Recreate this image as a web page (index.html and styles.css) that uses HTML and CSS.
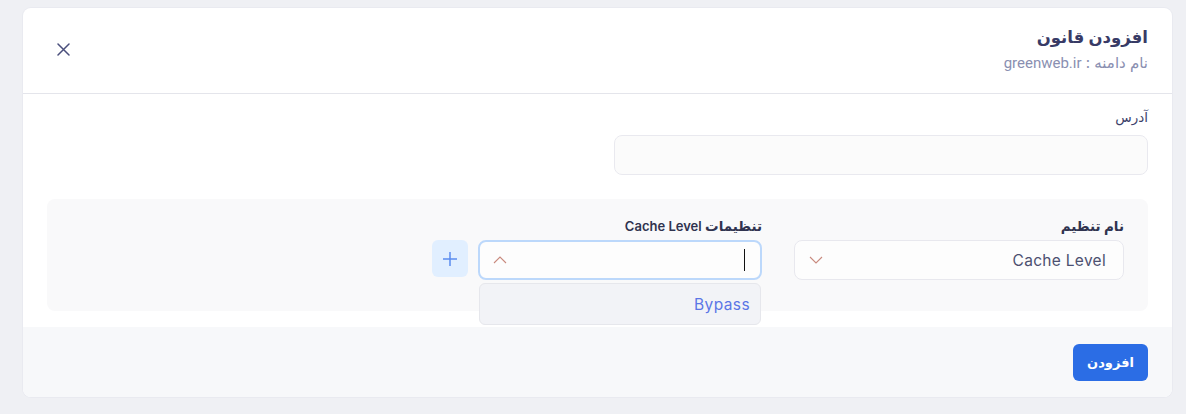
FILE: index.html
```html
<!DOCTYPE html>
<html lang="fa" dir="rtl">
<head>
<meta charset="utf-8">
<link rel="stylesheet" href="styles.css">
</head>
<body>
<div class="modal">
  <header class="modal-head">
    <div class="head-text">
      <h1 class="title">افزودن قانون</h1>
      <p class="subtitle">نام دامنه : <span class="domain">greenweb.ir</span></p>
    </div>
    <button class="close" aria-label="close">
      <svg width="13" height="13" viewBox="0 0 13 13"><path d="M1 1L12 12M12 1L1 12" stroke="#4a4f7c" stroke-width="1.5" stroke-linecap="round"/></svg>
    </button>
  </header>
  <section class="modal-body">
    <div class="addr-grid">
      <div class="field">
        <label class="label">آدرس</label>
        <div class="input"></div>
      </div>
    </div>
    <div class="rule-box">
      <div class="rule-grid">
        <div class="field">
          <label class="label bold">نام تنظیم</label>
          <div class="select">
            <span class="sel-text">Cache Level</span>
            <svg class="chev" width="14" height="8" viewBox="0 0 14 8"><path d="M1 1L7 7L13 1" fill="none" stroke="#c98a7e" stroke-width="1.1"/></svg>
          </div>
        </div>
        <div class="field">
          <label class="label bold">تنظیمات <span class="ltr">Cache Level</span></label>
          <div class="row">
            <div class="select focused">
              <span class="caret"></span>
              <svg class="chev" width="14" height="8" viewBox="0 0 14 8"><path d="M1 7L7 1L13 7" fill="none" stroke="#c98a7e" stroke-width="1.1"/></svg>
              <div class="dropdown"><span class="opt">Bypass</span></div>
            </div>
            <button class="plus" aria-label="add">
              <svg width="16" height="16" viewBox="0 0 16 16"><path d="M8 1V15M1 8H15" stroke="#5b8df0" stroke-width="1.5"/></svg>
            </button>
          </div>
        </div>
        <div class="field"></div>
      </div>
    </div>
  </section>
  <footer class="modal-foot">
    <button class="submit">افزودن</button>
  </footer>
</div>
</body>
</html>
```
FILE: styles.css
```css
* { box-sizing: border-box; }
html, body { margin: 0; }
body {
  background: #eff0f4;
  font-family: "Inter", "DejaVu Sans", sans-serif;
  padding: 8px 14px 0 23px;
  height: 414px;
  overflow: hidden;
}
.modal {
  background: #fff;
  border-radius: 8px;
  height: 389px;
  overflow: hidden;
  box-shadow: 0 0 0 1px #e9eaf0;
  display: flex;
  flex-direction: column;
}
.modal-head {
  height: 86px;
  padding: 0 24px;
  display: flex;
  align-items: center;
  justify-content: space-between;
  border-bottom: 1px solid #e4e5eb;
}
.head-text { margin-top: -4px; }
.title {
  margin: 0;
  font-size: 16.5px;
  font-weight: 600;
  color: #383b66;
  line-height: 24px;
}
.subtitle {
  margin: 4px 0 0;
  font-size: 15px;
  color: #8a8fb1;
  line-height: 20px;
}
.domain { font-family: "Roboto", sans-serif; font-size: 15px; }
.close {
  width: 32px;
  height: 32px;
  border: 0;
  background: none;
  padding: 0;
  display: flex;
  align-items: center;
  justify-content: center;
  margin-top: -3px;
}
.modal-body {
  padding: 13px 24px 16px;
}
.addr-grid {
  display: grid;
  grid-template-columns: 1fr 1fr;
  gap: 32px;
}
.label {
  display: block;
  font-size: 13.5px;
  color: #3c3f6b;
  line-height: 20px;
  margin-bottom: 8px;
}
.label.bold { font-weight: 600; color: #30334f; margin-bottom: 4px; }
.ltr { font-family: "Inter", sans-serif; font-size: 13px; }
.input {
  height: 40px;
  border: 1px solid #e9e9ef;
  border-radius: 8px;
  background: #fbfbfb;
}
.rule-box {
  margin-top: 24px;
  background: #f9f9fa;
  border-radius: 8px;
  padding: 17px 24px 31px 24px;
}
.rule-grid {
  display: grid;
  grid-template-columns: 330px 330px 1fr;
  gap: 32px;
}
.row { display: flex; gap: 10px; align-items: flex-start; }
.select {
  position: relative;
  height: 40px;
  border: 1px solid #e8e8ee;
  border-radius: 8px;
  background: #fdfdfd;
  display: flex;
  align-items: center;
  justify-content: space-between;
  padding: 0 17px 0 14px;
  flex: 1;
}
.sel-text {
  font-size: 15.5px;
  letter-spacing: 0.3px;
  color: #4c5070;
  direction: ltr;
}
.select.focused {
  border: 2px solid #bcd8fb;
  padding: 0 15px 0 13px;
}
.caret {
  width: 1px;
  height: 22px;
  background: #111;
}
.dropdown {
  position: absolute;
  top: 41px;
  left: -1px;
  right: -1px;
  height: 42px;
  background: #f2f3f7;
  border: 1px solid #e6e7ec;
  border-radius: 6px;
  display: flex;
  align-items: center;
  padding: 0 10px;
}
.opt {
  font-size: 15.5px;
  letter-spacing: 0.4px;
  color: #5b76e6;
  direction: ltr;
}
.plus {
  width: 36px;
  height: 37px;
  border: 0;
  border-radius: 6px;
  background: #e1efff;
  display: flex;
  align-items: center;
  justify-content: center;
  padding: 0;
}
.modal-foot {
  flex: 1;
  background: #f7f8fa;
  padding: 17px 24px 0;
  display: flex;
  align-items: flex-start;
}
.submit {
  height: 37px;
  padding: 0 14px;
  min-width: 75px;
  border: 0;
  border-radius: 6px;
  background: #2b6de5;
  color: #fff;
  font-family: "DejaVu Sans", sans-serif;
  font-size: 13px;
  font-weight: 600;
}
```
